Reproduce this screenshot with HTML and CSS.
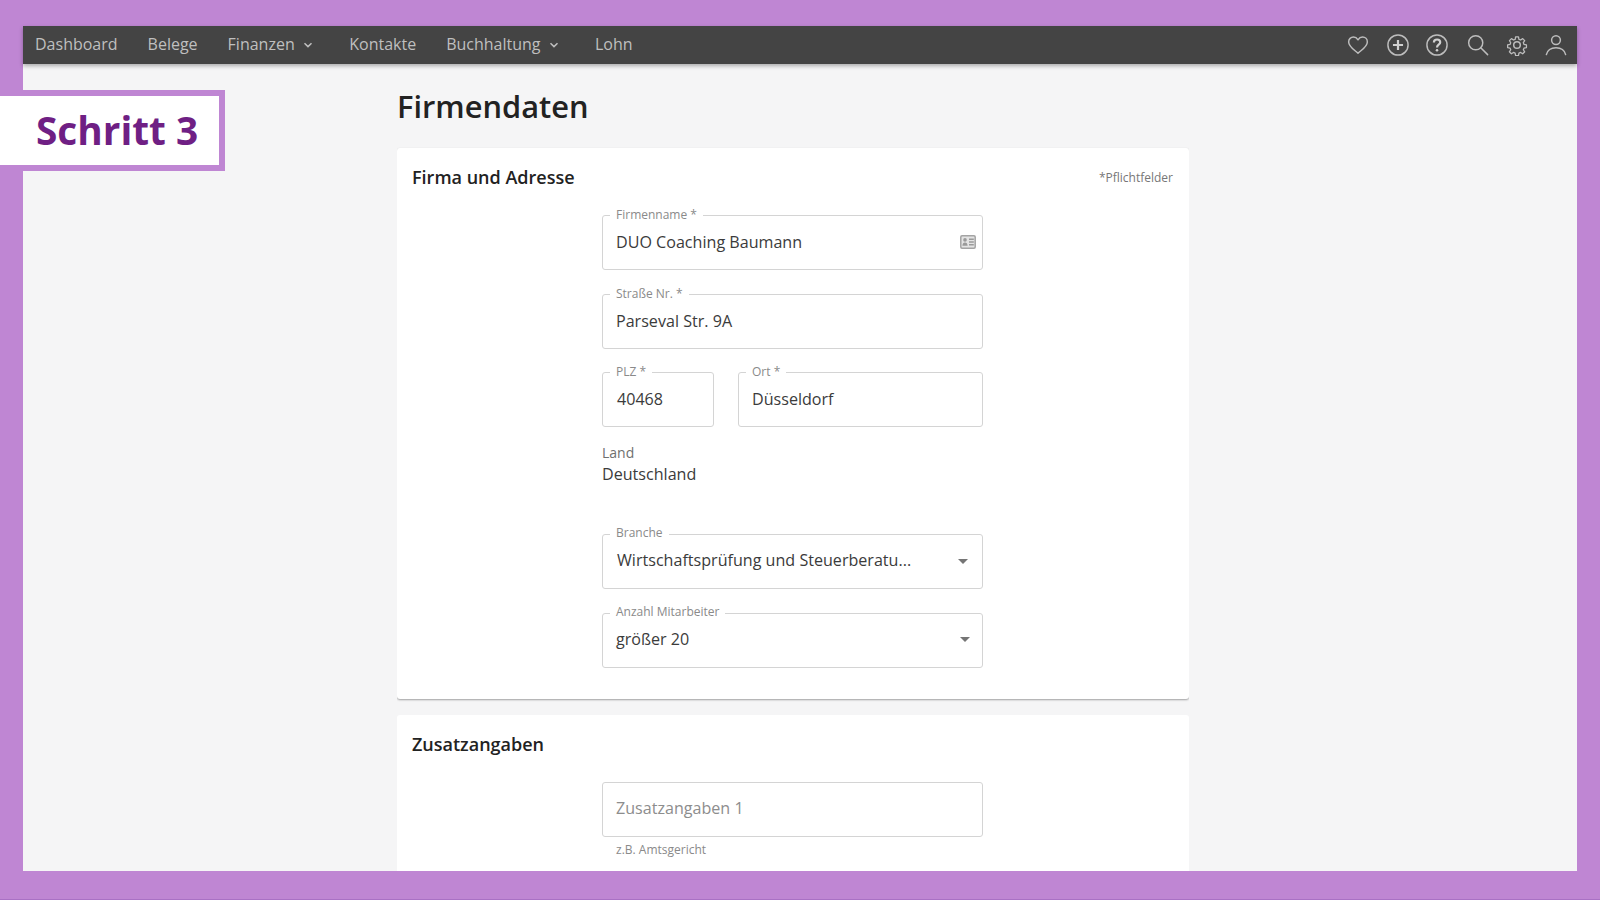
FILE: index.html
```html
<!DOCTYPE html>
<html lang="de">
<head>
<meta charset="utf-8">
<title>Firmendaten</title>
<link rel="stylesheet" href="styles.css">
</head>
<body>
<div class="frame">
  <nav class="nav">
    <div class="nav-links">
      <a class="nav-link">Dashboard</a>
      <a class="nav-link">Belege</a>
      <a class="nav-link has-caret">Finanzen <svg class="caret" viewBox="0 0 10 6"><path d="M1.5 1.2 5 4.6l3.5-3.4"/></svg></a>
      <a class="nav-link">Kontakte</a>
      <a class="nav-link has-caret">Buchhaltung <svg class="caret" viewBox="0 0 10 6"><path d="M1.5 1.2 5 4.6l3.5-3.4"/></svg></a>
      <a class="nav-link">Lohn</a>
    </div>
    <div class="nav-icons">
      <svg class="nav-icon icon-heart" viewBox="0 0 24 24"><path d="M12 21C8 17.300 1.800 13.600 1.800 8.600 1.800 5.400 4.300 3.300 7 3.300c2.100 0 3.800 1.100 5 3 1.200-1.900 2.900-3 5-3 2.700 0 5.200 2.100 5.200 5.300 0 5-6.200 8.700-10.200 12.400z"/></svg>
      <svg class="nav-icon" viewBox="0 0 24 24"><circle cx="12" cy="12" r="11"/><path class="thick" d="M12 6.500v11M6.500 12h11"/></svg>
      <svg class="nav-icon icon-help" viewBox="0 0 24 24"><circle cx="12" cy="12" r="11"/><path class="thick" d="M8.600 9.300c0-2 1.500-3.300 3.500-3.300s3.400 1.200 3.400 3c0 2.700-3.500 2.700-3.500 5.600"/><circle class="dot" cx="12" cy="17.800" r="1.400"/></svg>
      <svg class="nav-icon" viewBox="0 0 24 24"><circle cx="9.500" cy="9.500" r="7.700"/><path d="M15 15 22.500 22.500"/></svg>
      <svg class="nav-icon" viewBox="0 0 24 24"><circle cx="12" cy="12" r="3.600"/><path d="M10.200 1.800h3.600l.6 3 2.100.9 2.600-1.700 2.500 2.500-1.700 2.600.9 2.100 3 .6v3.400l-3 .6-.9 2.100 1.700 2.600-2.500 2.500-2.600-1.700-2.100.9-.6 3h-3.600l-.6-3-2.100-.9-2.600 1.700-2.500-2.500 1.700-2.600-.9-2.100-3-.6v-3.400l3-.6.9-2.100L2.500 6.500 5 4l2.600 1.700 2.100-.9z" transform="translate(1.600 1.600) scale(.87)"/></svg>
      <svg class="nav-icon" viewBox="0 0 24 24"><circle cx="12" cy="6.600" r="4.800"/><path d="M1.500 22.500c1.200-5.200 5.200-7.600 10.500-7.600s9.300 2.400 10.500 7.600"/></svg>
    </div>
  </nav>
  <div class="content">
    <div class="step"><span class="step-text">Schritt 3</span></div>
    <main class="main">
      <h1 class="title">Firmendaten</h1>
      <section class="card card-first">
        <header class="card-head">
          <h2 class="card-title">Firma und Adresse</h2>
          <span class="required">*Pflichtfelder</span>
        </header>
        <div class="form">
          <div class="field">
            <span class="legend">Firmenname *</span>
            <span class="value">DUO Coaching Baumann</span>
            <svg class="card-icon" viewBox="0 0 16 14"><rect class="card-frame" x=".8" y=".8" width="14.400" height="12.400" rx="1.200"/><circle cx="5" cy="4.900" r="1.800"/><path d="M2.400 10.800c0-2.200 1.100-3.400 2.600-3.400s2.600 1.200 2.600 3.400zM9 3.500h4.800v1.400H9zM9 6.300h4.800v1.400H9zM9 9.100h4.800v1.400H9z"/></svg>
          </div>
          <div class="field">
            <span class="legend">Straße Nr. *</span>
            <span class="value">Parseval Str. 9A</span>
          </div>
          <div class="field-row">
            <div class="field field-plz">
              <span class="legend">PLZ *</span>
              <span class="value value-in">40468</span>
            </div>
            <div class="field field-ort">
              <span class="legend">Ort *</span>
              <span class="value">Düsseldorf</span>
            </div>
          </div>
          <div class="static">
            <span class="static-label">Land</span>
            <span class="static-value">Deutschland</span>
          </div>
          <div class="field field-select">
            <span class="legend">Branche</span>
            <span class="value value-in">Wirtschaftsprüfung und Steuerberatu...</span>
            <span class="arrow arrow-a"></span>
          </div>
          <div class="field field-select">
            <span class="legend">Anzahl Mitarbeiter</span>
            <span class="value">größer 20</span>
            <span class="arrow arrow-b"></span>
          </div>
        </div>
      </section>
      <section class="card card-second">
        <h2 class="card-title">Zusatzangaben</h2>
        <div class="form form-second">
          <div class="field field-select">
            <span class="value placeholder">Zusatzangaben 1</span>
          </div>
          <p class="hint">z.B. Amtsgericht</p>
        </div>
      </section>
    </main>
  </div>
</div>
</body>
</html>
```
FILE: styles.css
```css
* { box-sizing: border-box; }
html, body { margin: 0; height: 100%; }
body {
  background: #bf86d3;
  font-family: "Open Sans", "Noto Sans", sans-serif;
  overflow: hidden;
}
.frame {
  height: 900px;
  padding: 26px 23px 28px;
  display: flex;
  flex-direction: column;
  border-bottom: 1px solid #a971c4;
}
.nav {
  height: 38px;
  flex: none;
  background: #444444;
  display: flex;
  justify-content: space-between;
  align-items: center;
  padding: 0 12px;
  box-shadow: 0 2px 4px rgba(0, 0, 0, .3);
  position: relative;
  z-index: 2;
}
.nav-links { display: flex; align-items: center; gap: 30px; }
.nav-link {
  color: #bfbfbf;
  font-size: 16px;
  line-height: 22px;
  padding-bottom: 2px;
  display: flex;
  align-items: center;
}
.has-caret { margin-right: 6.500px; }
.caret {
  width: 10px;
  height: 6px;
  margin-left: 8px;
  margin-top: 2px;
  fill: none;
  stroke: #bfbfbf;
  stroke-width: 1.500;
}
.nav-icons { display: flex; align-items: center; gap: 17px; margin-right: -2px; }
.nav-icon {
  width: 22px;
  height: 22px;
  fill: none;
  stroke: #bdbdbd;
  stroke-width: 1.600;
  stroke-linejoin: round;
  stroke-linecap: round;
}
.icon-heart { margin-right: 1px; }
.icon-help { margin-right: 2.500px; }
.nav-icon .thick { stroke: #d0d0d0; stroke-width: 2.400; stroke-linecap: butt; }
.nav-icon .dot { fill: #d0d0d0; stroke: none; }
.content {
  flex: 1;
  min-height: 0;
  background: #f5f5f6;
  position: relative;
}
.main {
  height: 100%;
  overflow: hidden;
  margin-left: 374px;
  width: 792px;
  padding-top: 23px;
}
.step {
  position: absolute;
  left: -23px;
  top: 26px;
  width: 225px;
  height: 81px;
  background: #fff;
  border: 6px solid #bf86d3;
  border-left: 0;
  display: flex;
  align-items: center;
  padding-left: 36px;
  padding-bottom: 2px;
}
.step-text {
  color: #6f1f84;
  font-size: 38.800px;
  font-weight: 700;
  line-height: 50px;
  white-space: nowrap;
}
.title {
  margin: 0 0 22px;
  font-size: 30.800px;
  line-height: 39px;
  font-weight: 600;
  color: #222;
}
.card {
  background: #fff;
  border-radius: 3px;
  padding: 17px 16px 0 15px;
}
.card-first {
  height: 551px;
  box-shadow: 0 1px 2px rgba(0, 0, 0, .35);
  margin-bottom: 16px;
}
.card-second { height: 180px; }
.card-head { display: flex; justify-content: space-between; align-items: center; }
.card-title {
  margin: 0;
  font-size: 18px;
  line-height: 25px;
  font-weight: 600;
  color: #222;
}
.required { font-size: 12px; color: #777; }
.form {
  width: 381px;
  margin: 25px 0 0 190px;
  display: flex;
  flex-direction: column;
  gap: 24px;
}
.form-second { gap: 5px; }
.field {
  position: relative;
  height: 55px;
  border: 1.500px solid #d4d4d4;
  border-radius: 3px;
  display: flex;
  align-items: center;
  padding: 0 13px 2px;
  background: #fff;
}
.field-select { padding-bottom: 4px; }
.legend {
  position: absolute;
  left: 7px;
  top: -9px;
  padding: 0 6px;
  background: #fff;
  font-size: 12px;
  line-height: 16px;
  color: #8a8a8a;
}
.field-select .legend { top: -10px; }
.value { font-size: 16.100px; color: #3b3b3b; white-space: nowrap; }
.value-in { margin-left: 1px; }
.placeholder { color: #8d8d8d; margin-left: 0; }
.field-row { display: flex; gap: 24px; margin-top: -1px; }
.field-plz { width: 112px; flex: none; }
.field-ort { flex: 1; }
.card-icon {
  position: absolute;
  right: 6px;
  top: 19px;
  width: 16px;
  height: 14px;
  fill: #9a9a9a;
}
.card-frame { fill: #e4e4e4; stroke: #a4a4a4; stroke-width: 1.500; }
.static { display: flex; flex-direction: column; margin: -8px 0 23px; }
.static-label { font-size: 14px; line-height: 20px; color: #6f6f6f; padding-bottom: 0; }
.static-value { font-size: 16.100px; line-height: 22px; padding-bottom: 2px; color: #3b3b3b; }
.arrow {
  position: absolute;
  top: 24px;
  width: 0;
  height: 0;
  border: 5px solid transparent;
  border-top: 5px solid #757575;
  border-bottom: 0;
}
.arrow-a { right: 14px; }
.arrow-b { right: 12px; top: 23px; }
.hint { margin: 0 0 0 14px; font-size: 12px; line-height: 16px; color: #8a8a8a; }
```
